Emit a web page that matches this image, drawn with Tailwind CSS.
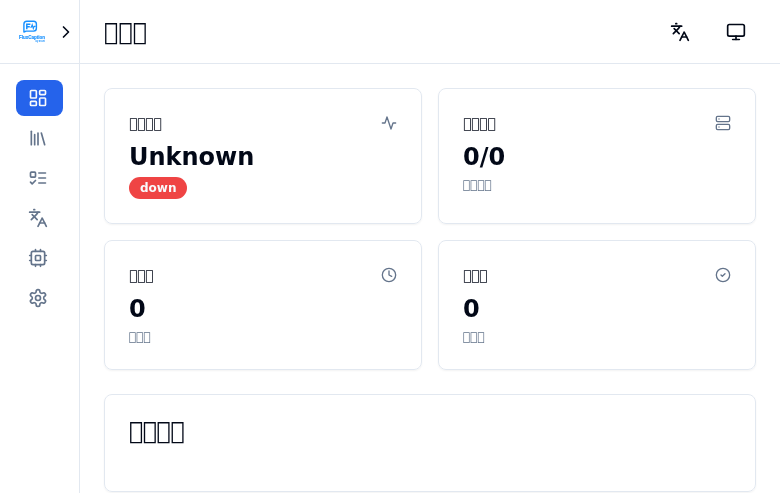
<!DOCTYPE html>
<html lang="zh">
<head>
<meta charset="utf-8">
<title>FluxCaption</title>
<script src="https://cdn.jsdelivr.net/npm/@tailwindcss/browser@4"></script>
</head>
<body class="font-['DejaVu_Sans',sans-serif] text-[#020817] bg-white">
<div class="flex h-[493px] w-[780px] overflow-hidden will-change-transform">
  <aside class="w-20 shrink-0 border-r border-[#e2e8f0]">
    <div class="flex h-16 items-center justify-between border-b border-[#e2e8f0] pl-4 pr-[3px]">
      <svg class="h-8 w-8" viewBox="0 0 32 32" fill="none" stroke="#1890ff">
        <path d="M7.9 16V8.3Q7.9 5.3 10.9 5.3H17.6Q20.4 5.3 20.4 8.1V12.3Q20.4 15.1 17.6 15.1H10.2Z" stroke-width="1.4" stroke-linejoin="round"/>
        <path d="M10.8 13.2V8.2H14.4M10.8 10.7H13.8" stroke-width="1.5"/>
        <path d="M14.3 11.3H15.3L16.2 8.7L17.3 12.5L18.2 10.4H19.6" stroke-width="1.1"/>
        <text x="3" y="23" font-family="Liberation Sans" font-weight="bold" font-size="5.4" textLength="26" lengthAdjust="spacingAndGlyphs" fill="#1890ff" stroke="#1890ff" stroke-width=".15">FluxCaption</text>
        <text x="19.5" y="26.2" font-family="Liberation Sans" font-weight="bold" font-size="2.6" textLength="9.3" lengthAdjust="spacingAndGlyphs" fill="#1890ff" stroke="none">by asset</text>
      </svg>
      <svg class="h-5 w-5" viewBox="0 0 24 24" fill="none" stroke="currentColor" stroke-width="2" stroke-linecap="round" stroke-linejoin="round"><path d="m9 18 6-6-6-6"/></svg>
    </div>
    <nav class="flex flex-col gap-1 p-4 text-[#64748b]">
      <a class="flex h-9 items-center rounded-lg bg-[#2563eb] px-3 text-[#f8fafc]"><svg class="h-5 w-5" viewBox="0 0 24 24" fill="none" stroke="currentColor" stroke-width="2" stroke-linecap="round" stroke-linejoin="round"><rect width="7" height="9" x="3" y="3" rx="1"/><rect width="7" height="5" x="14" y="3" rx="1"/><rect width="7" height="9" x="14" y="12" rx="1"/><rect width="7" height="5" x="3" y="16" rx="1"/></svg></a>
      <a class="flex h-9 items-center px-3"><svg class="h-5 w-5" viewBox="0 0 24 24" fill="none" stroke="currentColor" stroke-width="2" stroke-linecap="round" stroke-linejoin="round"><path d="m16 6 4 14"/><path d="M12 6v14"/><path d="M8 8v12"/><path d="M4 4v16"/></svg></a>
      <a class="flex h-9 items-center px-3"><svg class="h-5 w-5" viewBox="0 0 24 24" fill="none" stroke="currentColor" stroke-width="2" stroke-linecap="round" stroke-linejoin="round"><rect x="3" y="5" width="6" height="6" rx="1"/><path d="m3 17 2 2 4-4"/><path d="M13 6h8"/><path d="M13 12h8"/><path d="M13 18h8"/></svg></a>
      <a class="flex h-9 items-center px-3"><svg class="h-5 w-5" viewBox="0 0 24 24" fill="none" stroke="currentColor" stroke-width="2" stroke-linecap="round" stroke-linejoin="round"><path d="m5 8 6 6"/><path d="m4 14 6-6 2-3"/><path d="M2 5h12"/><path d="M7 2h1"/><path d="m22 22-5-10-5 10"/><path d="M14 18h6"/></svg></a>
      <a class="flex h-9 items-center px-3"><svg class="h-5 w-5" viewBox="0 0 24 24" fill="none" stroke="currentColor" stroke-width="2" stroke-linecap="round" stroke-linejoin="round"><rect width="16" height="16" x="4" y="4" rx="2"/><rect width="6" height="6" x="9" y="9" rx="1"/><path d="M15 2v2M15 20v2M2 15h2M2 9h2M20 15h2M20 9h2M9 2v2M9 20v2"/></svg></a>
      <a class="flex h-9 items-center px-3"><svg class="h-5 w-5" viewBox="0 0 24 24" fill="none" stroke="currentColor" stroke-width="2" stroke-linecap="round" stroke-linejoin="round"><path d="M12.22 2h-.44a2 2 0 0 0-2 2v.18a2 2 0 0 1-1 1.73l-.43.25a2 2 0 0 1-2 0l-.15-.08a2 2 0 0 0-2.73.73l-.22.38a2 2 0 0 0 .73 2.73l.15.1a2 2 0 0 1 1 1.72v.51a2 2 0 0 1-1 1.74l-.15.09a2 2 0 0 0-.73 2.73l.22.38a2 2 0 0 0 2.73.73l.15-.08a2 2 0 0 1 2 0l.43.25a2 2 0 0 1 1 1.73V20a2 2 0 0 0 2 2h.44a2 2 0 0 0 2-2v-.18a2 2 0 0 1 1-1.73l.43-.25a2 2 0 0 1 2 0l.15.08a2 2 0 0 0 2.73-.73l.22-.39a2 2 0 0 0-.73-2.73l-.15-.08a2 2 0 0 1-1-1.74v-.5a2 2 0 0 1 1-1.74l.15-.09a2 2 0 0 0 .73-2.73l-.22-.38a2 2 0 0 0-2.73-.73l-.15.08a2 2 0 0 1-2 0l-.43-.25a2 2 0 0 1-1-1.73V4a2 2 0 0 0-2-2z"/><circle cx="12" cy="12" r="3"/></svg></a>
    </nav>
  </aside>
  <div class="flex min-w-0 flex-1 flex-col">
    <header class="flex h-16 shrink-0 items-center justify-between border-b border-[#e2e8f0] px-6">
      <h1 class="text-2xl font-semibold">&#xE100;&#xE100;&#xE100;</h1>
      <div class="flex gap-4">
        <button class="flex h-10 w-10 items-center justify-center"><svg class="h-5 w-5" viewBox="0 0 24 24" fill="none" stroke="currentColor" stroke-width="2" stroke-linecap="round" stroke-linejoin="round"><path d="m5 8 6 6"/><path d="m4 14 6-6 2-3"/><path d="M2 5h12"/><path d="M7 2h1"/><path d="m22 22-5-10-5 10"/><path d="M14 18h6"/></svg></button>
        <button class="flex h-10 w-10 items-center justify-center"><svg class="h-5 w-5" viewBox="0 0 24 24" fill="none" stroke="currentColor" stroke-width="2" stroke-linecap="round" stroke-linejoin="round"><rect width="20" height="14" x="2" y="3" rx="2"/><path d="M8 21h8"/><path d="M12 17v4"/></svg></button>
      </div>
    </header>
    <main class="flex flex-col gap-6 p-6">
      <div class="grid grid-cols-2 gap-4">
        <section class="rounded-lg border border-[#e2e8f0] p-6 shadow-[0_1px_2px_0_rgb(0_0_0/0.05)]">
          <div class="flex items-start justify-between pb-2">
            <h3 class="text-sm font-medium tracking-tight">&#xE100;&#xE100;&#xE100;&#xE100;</h3>
            <svg class="mt-0.5 h-4 w-4 text-[#64748b]" viewBox="0 0 24 24" fill="none" stroke="currentColor" stroke-width="2" stroke-linecap="round" stroke-linejoin="round"><path d="M22 12h-4l-3 9L9 3l-3 9H2"/></svg>
          </div>
          <div class="text-2xl font-bold">Unknown</div>
          <div class="mt-1 flex"><span class="rounded-full border border-transparent bg-[#ef4444] px-2.5 py-0.5 text-xs font-semibold text-[#f8fafc]">down</span></div>
        </section>
        <section class="rounded-lg border border-[#e2e8f0] p-6 shadow-[0_1px_2px_0_rgb(0_0_0/0.05)]">
          <div class="flex items-start justify-between pb-2">
            <h3 class="text-sm font-medium tracking-tight">&#xE100;&#xE100;&#xE100;&#xE100;</h3>
            <svg class="mt-0.5 h-4 w-4 text-[#64748b]" viewBox="0 0 24 24" fill="none" stroke="currentColor" stroke-width="2" stroke-linecap="round" stroke-linejoin="round"><rect width="20" height="8" x="2" y="2" rx="2"/><rect width="20" height="8" x="2" y="14" rx="2"/><path d="M6 6h.01M6 18h.01"/></svg>
          </div>
          <div class="text-2xl font-bold">0/0</div>
          <p class="mt-1 text-xs text-[#64748b]">&#xE100;&#xE100;&#xE100;&#xE100;</p>
        </section>
        <section class="rounded-lg border border-[#e2e8f0] p-6 shadow-[0_1px_2px_0_rgb(0_0_0/0.05)]">
          <div class="flex items-start justify-between pb-2">
            <h3 class="text-sm font-medium tracking-tight">&#xE100;&#xE100;&#xE100;</h3>
            <svg class="mt-0.5 h-4 w-4 text-[#64748b]" viewBox="0 0 24 24" fill="none" stroke="currentColor" stroke-width="2" stroke-linecap="round" stroke-linejoin="round"><circle cx="12" cy="12" r="10"/><path d="M12 6v6l4 2"/></svg>
          </div>
          <div class="text-2xl font-bold">0</div>
          <p class="mt-1 text-xs text-[#64748b]">&#xE100;&#xE100;&#xE100;</p>
        </section>
        <section class="rounded-lg border border-[#e2e8f0] p-6 shadow-[0_1px_2px_0_rgb(0_0_0/0.05)]">
          <div class="flex items-start justify-between pb-2">
            <h3 class="text-sm font-medium tracking-tight">&#xE100;&#xE100;&#xE100;</h3>
            <svg class="mt-0.5 h-4 w-4 text-[#64748b]" viewBox="0 0 24 24" fill="none" stroke="currentColor" stroke-width="2" stroke-linecap="round" stroke-linejoin="round"><circle cx="12" cy="12" r="10"/><path d="m9 12 2 2 4-4"/></svg>
          </div>
          <div class="text-2xl font-bold">0</div>
          <p class="mt-1 text-xs text-[#64748b]">&#xE100;&#xE100;&#xE100;</p>
        </section>
      </div>
      <section class="rounded-lg border border-[#e2e8f0] px-6 pt-6 pb-12 shadow-[0_1px_2px_0_rgb(0_0_0/0.05)]">
        <h3 class="text-2xl leading-none font-semibold tracking-tight">&#xE100;&#xE100;&#xE100;&#xE100;</h3>
      </section>
    </main>
  </div>
</div>
</body>
</html>
